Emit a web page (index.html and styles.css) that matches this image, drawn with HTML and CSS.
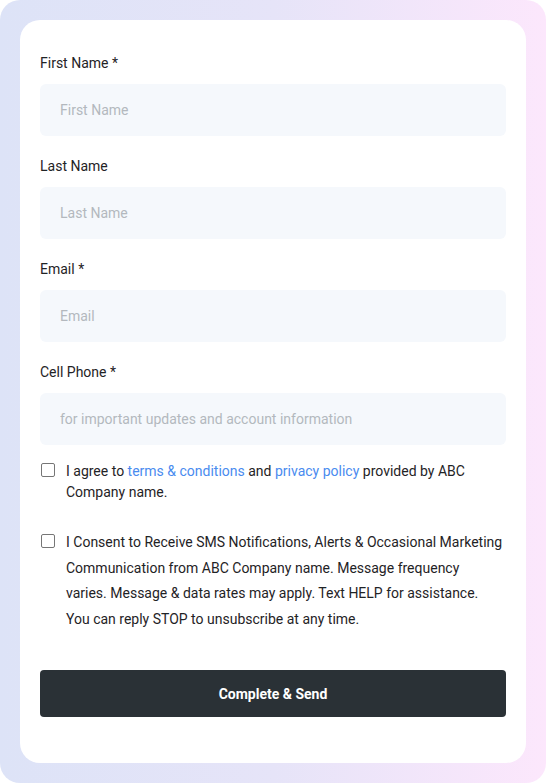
FILE: index.html
```html
<!DOCTYPE html>
<html lang="en">
<head>
<meta charset="utf-8">
<title>Form</title>
<link rel="stylesheet" href="styles.css">
</head>
<body>
<div class="frame">
  <form class="card">
    <div class="field">
      <label class="label">First Name *</label>
      <input class="input" type="text" placeholder="First Name">
    </div>
    <div class="field">
      <label class="label">Last Name</label>
      <input class="input" type="text" placeholder="Last Name">
    </div>
    <div class="field">
      <label class="label">Email *</label>
      <input class="input" type="text" placeholder="Email">
    </div>
    <div class="field">
      <label class="label">Cell Phone *</label>
      <input class="input" type="text" placeholder="for important updates and account information">
    </div>
    <label class="check check-terms">
      <span class="box"></span>
      <span class="check-text">I agree to <a class="link">terms &amp; conditions</a> and <a class="link">privacy policy</a> provided by ABC Company name.</span>
    </label>
    <label class="check check-sms">
      <span class="box"></span>
      <span class="check-text">I Consent to Receive SMS Notifications, Alerts &amp; Occasional Marketing Communication from ABC Company name. Message frequency<br>varies. Message &amp; data rates may apply. Text HELP for assistance.<br>You can reply STOP to unsubscribe at any time.</span>
    </label>
    <button class="submit" type="button">Complete &amp; Send</button>
  </form>
</div>
</body>
</html>
```

FILE: styles.css
```css
html, body {
  margin: 0;
  padding: 0;
  background: #ffffff;
}
body {
  font-family: Roboto, "Liberation Sans", sans-serif;
  color: #1f2326;
}
.frame {
  width: 546px;
  height: 783px;
  box-sizing: border-box;
  padding: 20px;
  border-radius: 20px;
  background: linear-gradient(90deg, #dde3f7 0%, #e6e4f8 50%, #fce7fc 100%);
}
.card {
  box-sizing: border-box;
  height: 743px;
  background: #ffffff;
  border-radius: 20px;
  padding: 33px 20px 46px 20px;
  display: flex;
  flex-direction: column;
}
.field {
  display: flex;
  flex-direction: column;
  margin-bottom: 20px;
}
.label {
  font-size: 14px;
  line-height: 20px;
  margin-bottom: 11px;
  color: #1f2326;
}
.input {
  height: 52px;
  box-sizing: border-box;
  border: none;
  border-radius: 6px;
  background: #f5f8fc;
  padding: 0 20px;
  font-family: Roboto, "Liberation Sans", sans-serif;
  font-size: 14px;
  color: #1f2326;
  outline: none;
}
.input::placeholder {
  color: #b3b8be;
}
.check {
  display: flex;
  align-items: flex-start;
  gap: 11px;
  font-size: 14px;
  padding-left: 1px;
}
.check-terms {
  margin-top: -4px;
  line-height: 21px;
}
.check-sms {
  margin-top: 27px;
  line-height: 25.5px;
}
.box {
  flex: none;
  width: 14px;
  height: 14px;
  box-sizing: border-box;
  border: 1px solid #767676;
  border-radius: 2px;
  background: #fff;
}
.check-terms .box {
  margin-top: 2px;
}
.check-sms .box {
  margin-top: 4px;
}
.check-text {
  color: #1f2326;
}
.link {
  color: #4a8bef;
  text-decoration: none;
}
.submit {
  margin-top: auto;
  height: 47px;
  border: none;
  border-radius: 4px;
  background: #2a3136;
  color: #ffffff;
  font-family: Roboto, "Liberation Sans", sans-serif;
  font-size: 14px;
  font-weight: 700;
}
```
